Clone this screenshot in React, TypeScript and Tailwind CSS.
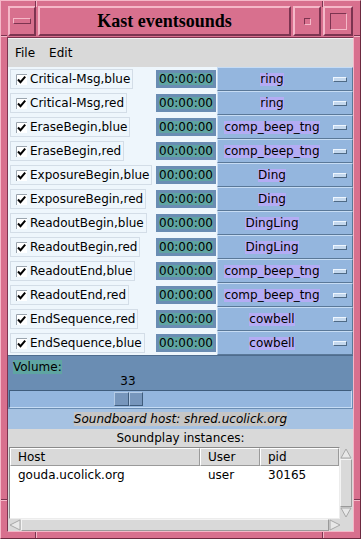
import React from 'react';

const ROWS: [string, string][] = [
  ['Critical-Msg,blue', 'ring'],
  ['Critical-Msg,red', 'ring'],
  ['EraseBegin,blue', 'comp_beep_tng'],
  ['EraseBegin,red', 'comp_beep_tng'],
  ['ExposureBegin,blue', 'Ding'],
  ['ExposureBegin,red', 'Ding'],
  ['ReadoutBegin,blue', 'DingLing'],
  ['ReadoutBegin,red', 'DingLing'],
  ['ReadoutEnd,blue', 'comp_beep_tng'],
  ['ReadoutEnd,red', 'comp_beep_tng'],
  ['EndSequence,red', 'cowbell'],
  ['EndSequence,blue', 'cowbell'],
];

const raisedPink =
  'bg-[#d8708e] border-2 border-t-[#f5b8c8] border-l-[#f5b8c8] border-r-[#7c3450] border-b-[#7c3450]';

function CheckIcon() {
  return (
    <svg width="11" height="11" viewBox="0 0 11 11" className="shrink-0">
      <rect x="0" y="0" width="11" height="11" fill="#ffffff" />
      <path d="M0.5 11 V0.5 H11" fill="none" stroke="#9aa4ae" strokeWidth="1" />
      <path d="M2 5.5 L4.5 8.2 L9.2 2.6" fill="none" stroke="#000" strokeWidth="2" />
    </svg>
  );
}

function Row({ name, sound }: { name: string; sound: string }) {
  return (
    <div className="flex h-[24px]">
      <div className="w-[148px] bg-[#eef6fc] pl-[2px] flex items-center">
        <div className="h-[20px] border border-[#d3dde7] pl-[5px] pr-[2px] flex items-center gap-[3px]">
          <CheckIcon />
          <span className="leading-none">{name}</span>
        </div>
      </div>
      <div className="w-[61px] bg-[#eef6fc] flex items-center">
        <div className="w-[60px] h-[18px] bg-[#6a8db3] flex items-center justify-center">
          <span className="bg-[#5fa5a2] leading-[12px]">00:00:00</span>
        </div>
      </div>
      <div className="w-[136px] bg-[#94b6de] border border-t-[#c6dcf4] border-l-[#c6dcf4] border-r-[#5a7898] border-b-[#5a7898] flex items-center pl-[1px]">
        <div className="flex-1 text-center">
          <span className="bg-[#b4acf4] leading-[13px] inline-block">{sound}</span>
        </div>
        <div className="ml-[8px] mr-[5px] w-[14px] h-[5px] bg-[#c4d8ee] border border-t-[#eef6ff] border-l-[#eef6ff] border-r-[#4f6a86] border-b-[#4f6a86]" />
      </div>
    </div>
  );
}

function Arrow({ dir }: { dir: 'up' | 'down' | 'left' | 'right' }) {
  const pts = {
    up: '6,2 11,11 1,11',
    down: '1,1 11,1 6,10',
    left: '1,6 11,1 11,11',
    right: '1,1 11,6 1,11',
  }[dir];
  return (
    <svg width="12" height="12" viewBox="0 0 12 12" className="shrink-0">
      <polygon points={pts} fill="#e8e8e8" stroke="#a8a8a8" strokeWidth="1" />
    </svg>
  );
}

export default function App() {
  return (
    <div className="relative w-[361px] h-[539px] bg-[#d8708e] border border-t-[#f5b8c8] border-l-[#f5b8c8] border-r-[#6c2a40] border-b-[#6c2a40] pt-[5px] px-[6px] flex flex-col font-['DejaVu_Sans',sans-serif] text-[12px] text-black">
      {/* frame resize notches */}
      <div className="absolute left-[34px] top-0 w-[2px] h-[6px] border-l border-l-[#7c3450] border-r border-r-[#f5b8c8]" />
      <div className="absolute left-[321px] top-0 w-[2px] h-[6px] border-l border-l-[#7c3450] border-r border-r-[#f5b8c8]" />
      <div className="absolute left-[34px] bottom-0 w-[2px] h-[6px] border-l border-l-[#7c3450] border-r border-r-[#f5b8c8]" />
      <div className="absolute left-[321px] bottom-0 w-[2px] h-[6px] border-l border-l-[#7c3450] border-r border-r-[#f5b8c8]" />
      <div className="absolute left-0 top-[34px] w-[6px] h-[2px] border-t border-t-[#7c3450] border-b border-b-[#f5b8c8]" />
      <div className="absolute right-0 top-[34px] w-[6px] h-[2px] border-t border-t-[#7c3450] border-b border-b-[#f5b8c8]" />
      <div className="absolute left-0 top-[498px] w-[6px] h-[2px] border-t border-t-[#7c3450] border-b border-b-[#f5b8c8]" />
      <div className="absolute right-0 top-[498px] w-[6px] h-[2px] border-t border-t-[#7c3450] border-b border-b-[#f5b8c8]" />

      {/* Title bar */}
      <div className="h-[30px] flex gap-[2px] px-[1px]">
        <div className={`w-[28px] ${raisedPink} flex items-center justify-center`}>
          <div className="w-[18px] h-[6px] border border-t-[#f5b8c8] border-l-[#f5b8c8] border-r-[#7c3450] border-b-[#7c3450]" />
        </div>
        <div className={`flex-1 ${raisedPink} flex items-center justify-center`}>
          <span className="font-['Liberation_Serif',serif] font-bold text-[18px] leading-none">Kast eventsounds</span>
        </div>
        <div className={`w-[28px] ${raisedPink} flex items-center justify-center`}>
          <div className="w-[7px] h-[7px] border border-t-[#7c3450] border-l-[#7c3450] border-r-[#f5b8c8] border-b-[#f5b8c8]" />
        </div>
        <div className={`w-[30px] ${raisedPink} flex items-center justify-center`}>
          <div className="w-[17px] h-[17px] border border-t-[#7c3450] border-l-[#7c3450] border-r-[#f5b8c8] border-b-[#f5b8c8]" />
        </div>
      </div>

      {/* Main panel */}
      <div className="mt-[1px] w-[347px] h-[495px] border border-t-[#7c3450] border-l-[#7c3450] border-r-[#f5b8c8] border-b-[#f5b8c8] flex flex-col">
        <div className="h-[29px] bg-[#d9d9d9] border-t border-t-[#f2f2f2] flex items-center gap-[14px] px-[7px]">
          <span>File</span>
          <span>Edit</span>
        </div>

        {ROWS.map(([n, s]) => (
          <Row key={n} name={n} sound={s} />
        ))}

        {/* Volume scale */}
        <div className="h-[54px] bg-[#6a8db3] border-t border-t-[#4e6c8e] pt-[4px] flex flex-col">
          <div className="h-[14px] leading-[14px] pl-[5px]">
            <span className="bg-[#5fa5a2]">Volume:</span>
          </div>
          <div className="h-[14px] leading-[14px] ml-[105px] w-[30px] text-center">33</div>
          <div className="mt-[2px] mx-[1px] h-[18px] bg-[#94b6de] border border-t-[#3f5c7c] border-l-[#3f5c7c] border-r-[#c6dcf4] border-b-[#c6dcf4] flex items-center">
            <div className="ml-[104px] h-[14px] flex">
              <div className="w-[15px] h-full bg-[#7796bc] border border-t-[#b4cbe6] border-l-[#b4cbe6] border-r-[#3f5c7c] border-b-[#3f5c7c]" />
              <div className="w-[14px] h-full bg-[#7796bc] border border-t-[#b4cbe6] border-l-[#b4cbe6] border-r-[#3f5c7c] border-b-[#3f5c7c]" />
            </div>
          </div>
        </div>

        <div className="h-[20px] bg-[#a6c2e2] flex items-center justify-center">
          <span className="italic bg-[#c6c6c6] leading-[14px]">Soundboard host: shred.ucolick.org</span>
        </div>
        <div className="h-[18px] bg-[#d9d9d9] flex items-center justify-center">Soundplay instances:</div>

        {/* Instance table */}
        <div className="flex-1 bg-[#d9d9d9] px-[1px] flex flex-col">
          <div className="h-[72px] flex">
            <div className="w-[332px] bg-white border border-t-[#8a8a8a] border-l-[#8a8a8a] border-r-[#ececec] border-b-[#ececec] flex flex-col">
              <div className="h-[18px] flex bg-[#d9d9d9]">
                <div className="w-[190px] border border-t-white border-l-white border-r-[#9a9a9a] border-b-[#9a9a9a] pl-[7px] leading-[16px]">Host</div>
                <div className="w-[60px] border border-t-white border-l-white border-r-[#9a9a9a] border-b-[#9a9a9a] pl-[7px] leading-[16px]">User</div>
                <div className="flex-1 border border-t-white border-l-white border-r-[#9a9a9a] border-b-[#9a9a9a] pl-[7px] leading-[16px]">pid</div>
              </div>
              <div className="h-[17px] flex items-center">
                <div className="w-[190px] pl-[8px]">gouda.ucolick.org</div>
                <div className="w-[60px] pl-[8px]">user</div>
                <div className="flex-1 pl-[8px]">30165</div>
              </div>
            </div>
            <div className="w-[12px] flex flex-col">
              <Arrow dir="up" />
              <div className="flex-1 border border-t-[#f4f4f4] border-l-[#f4f4f4] border-r-[#9a9a9a] border-b-[#9a9a9a]" />
              <Arrow dir="down" />
            </div>
          </div>
          <div className="h-[12px] w-[332px] flex">
            <Arrow dir="left" />
            <div className="flex-1 border border-t-[#f4f4f4] border-l-[#f4f4f4] border-r-[#9a9a9a] border-b-[#9a9a9a]" />
            <Arrow dir="right" />
          </div>
        </div>
      </div>
    </div>
  );
}
